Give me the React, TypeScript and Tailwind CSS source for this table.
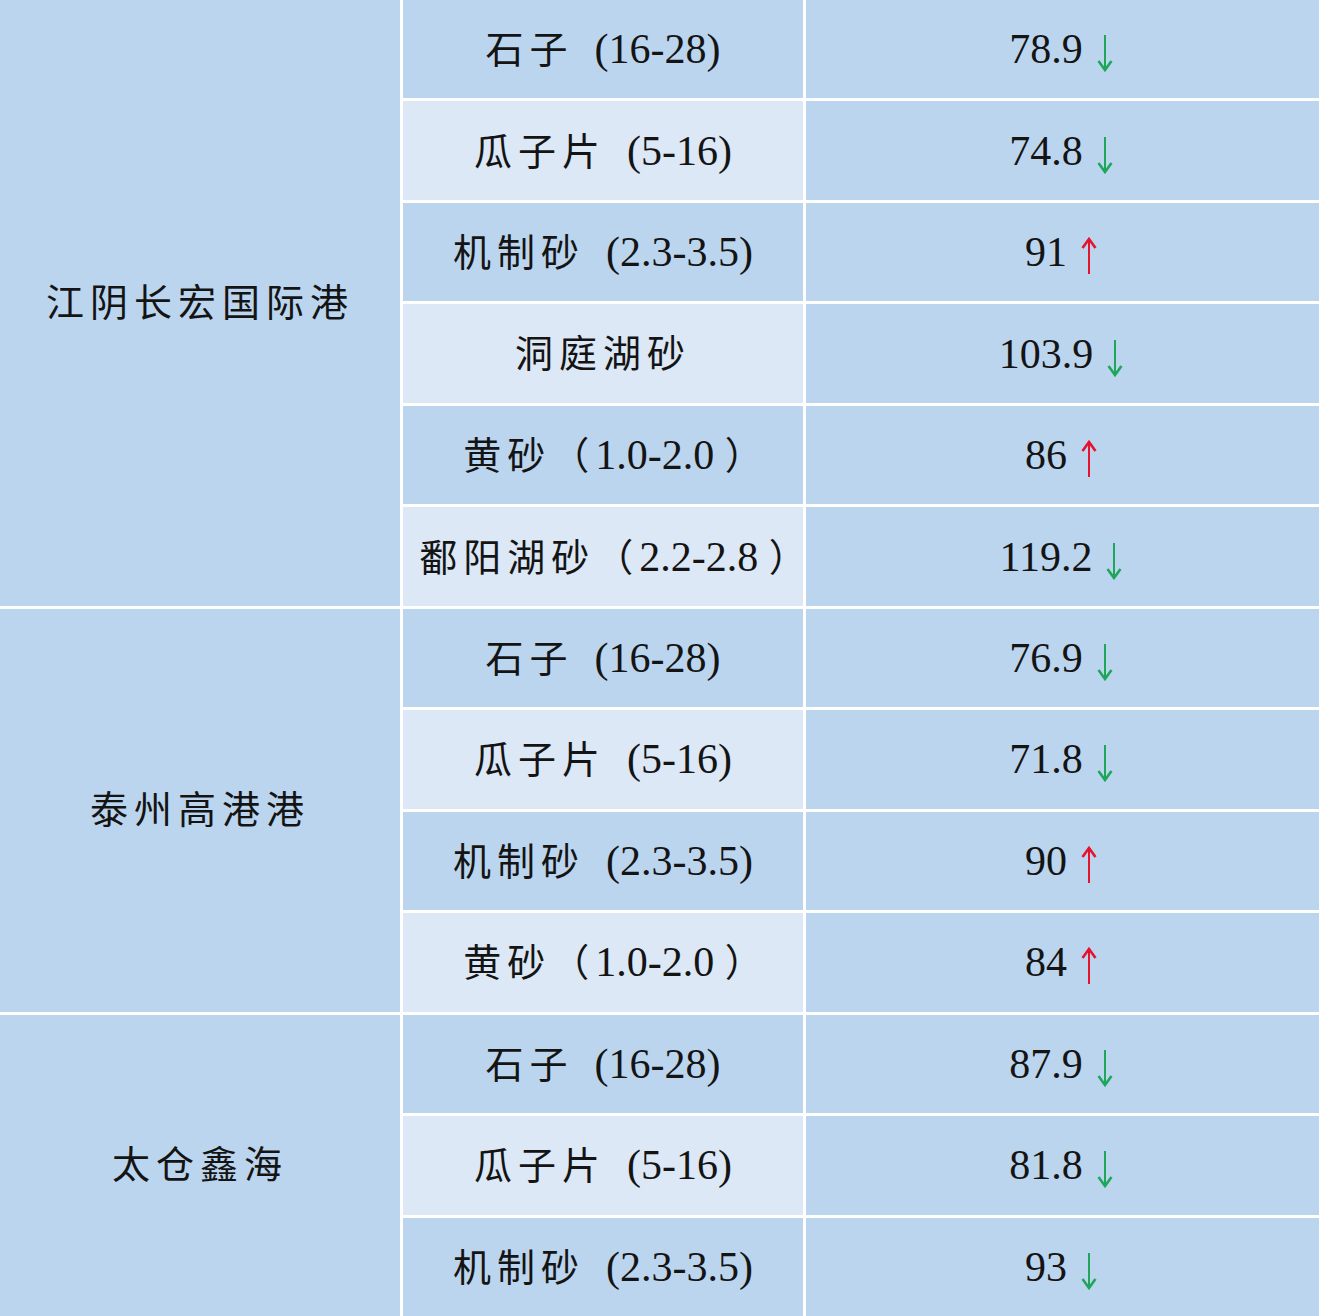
import React from "react";

const DARK = "bg-[#bcd5ee]";
const LIGHT = "bg-[#dce8f6]";

const isCJK = (s: string) => /[\u3000-\u303f\u4e00-\u9fff\uff00-\uffef]/.test(s);

function Txt({ t }: { t: string }) {
  const parts = t.split(/(）|[\u3000-\u303f\u4e00-\u9fff\uff00-\uffef]+)/).filter(Boolean);
  return (
    <span className="whitespace-pre leading-none">
      {parts.map((p, i) =>
        p === "）" ? (
          <span key={i} className="text-[38px] leading-none mr-[-20px]">
            {p}
          </span>
        ) : isCJK(p) ? (
          <span key={i} className="text-[38px] tracking-[6px] leading-none">
            {p}
          </span>
        ) : (
          <span key={i} className="text-[42px] leading-none">
            {p}
          </span>
        )
      )}
    </span>
  );
}

function Arrow({ up }: { up: boolean }) {
  const color = up ? "#e5132d" : "#1fa65b";
  return (
    <svg width="22" height="38" viewBox="0 0 22 38" className="ml-[11px] translate-y-[4px]" fill="none">
      {up ? (
        <>
          <line x1="11" y1="3" x2="11" y2="37" stroke={color} strokeWidth="2" />
          <polyline points="4.5,11 11,2 17.5,11" stroke={color} strokeWidth="2.6" strokeLinejoin="miter" />
        </>
      ) : (
        <>
          <line x1="11" y1="1" x2="11" y2="35" stroke={color} strokeWidth="2" />
          <polyline points="4.5,27 11,36 17.5,27" stroke={color} strokeWidth="2.6" strokeLinejoin="miter" />
        </>
      )}
    </svg>
  );
}

const NB = "\u00a0\u00a0";

const rows: { name: string; val: string; up: boolean }[] = [
  { name: `石子${NB}(16-28)`, val: "78.9", up: false },
  { name: `瓜子片${NB}(5-16)`, val: "74.8", up: false },
  { name: `机制砂${NB}(2.3-3.5)`, val: "91", up: true },
  { name: "洞庭湖砂", val: "103.9", up: false },
  { name: "黄砂（1.0-2.0\u00a0）", val: "86", up: true },
  { name: "鄱阳湖砂（2.2-2.8\u00a0）", val: "119.2", up: false },
  { name: `石子${NB}(16-28)`, val: "76.9", up: false },
  { name: `瓜子片${NB}(5-16)`, val: "71.8", up: false },
  { name: `机制砂${NB}(2.3-3.5)`, val: "90", up: true },
  { name: "黄砂（1.0-2.0\u00a0）", val: "84", up: true },
  { name: `石子${NB}(16-28)`, val: "87.9", up: false },
  { name: `瓜子片${NB}(5-16)`, val: "81.8", up: false },
  { name: `机制砂${NB}(2.3-3.5)`, val: "93", up: false },
];

const groups = [
  { name: "江阴长宏国际港", start: 0, span: "row-span-6" },
  { name: "泰州高港港", start: 6, span: "row-span-4" },
  { name: "太仓鑫海", start: 10, span: "row-span-3" },
];

export default function App() {
  const cells: React.ReactNode[] = [];
  rows.forEach((r, i) => {
    const g = groups.find((g) => g.start === i);
    if (g) {
      cells.push(
        <div key={`g${i}`} className={`${g.span} ${DARK} col-start-1 flex items-center justify-center`}>
          <Txt t={g.name} />
        </div>
      );
    }
    cells.push(
      <div key={`n${i}`} className={`${i % 2 === 0 ? DARK : LIGHT} col-start-2 flex items-center justify-center`}>
        <Txt t={r.name} />
      </div>
    );
    cells.push(
      <div key={`v${i}`} className={`${DARK} col-start-3 flex items-center justify-center`}>
        <span className="text-[42px] leading-none">{r.val}</span>
        <Arrow up={r.up} />
      </div>
    );
  });

  return (
    <div
      className="w-[1322px] h-[1316px] overflow-hidden bg-white pr-[3px] text-[#141414]"
      style={{ fontFamily: '"Liberation Serif", "Noto Sans CJK SC", serif' }}
    >
      <div className="grid h-full grid-cols-[400px_400px_513px] grid-rows-[repeat(13,minmax(0,1fr))] gap-[3px] grid-flow-row-dense">
        {cells}
      </div>
    </div>
  );
}
